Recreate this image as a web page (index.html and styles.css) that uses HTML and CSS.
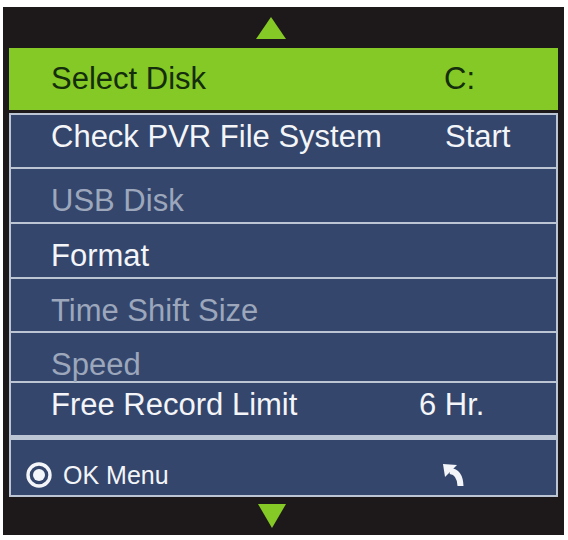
FILE: index.html
```html
<!DOCTYPE html>
<html lang="en">
<head>
<meta charset="utf-8">
<title>PVR File System</title>
<link rel="stylesheet" href="styles.css">
</head>
<body>
<div class="frame">
  <div class="arrow arrow--up">
    <svg width="30" height="22" viewBox="0 0 30 22"><polygon points="15,0 30,22 0,22" fill="#84c925"/></svg>
  </div>
  <div class="row row--selected">
    <span class="label">Select Disk</span><span class="value">C:</span>
  </div>
  <div class="list">
    <div class="row row--high"><span class="label">Check PVR File System</span><span class="value value--start">Start</span></div>
    <div class="row row--dim row--tall"><span class="label">USB Disk</span></div>
    <div class="row row--tall"><span class="label">Format</span></div>
    <div class="row row--dim"><span class="label">Time Shift Size</span></div>
    <div class="row row--dim row--short"><span class="label">Speed</span></div>
    <div class="row row--high"><span class="label">Free Record Limit</span><span class="value value--wide">6 Hr.</span></div>
    <div class="footer">
      <svg class="ok-icon" width="26" height="26" viewBox="0 0 26 26"><circle cx="13" cy="13" r="11" fill="none" stroke="#f3f5f8" stroke-width="3.4"/><circle cx="13" cy="13" r="6" fill="#f3f5f8"/></svg>
      <span class="footer-label">OK Menu</span>
      <svg class="back-icon" width="22" height="24" viewBox="0 0 22 24"><polygon points="0,1 14,2 2,14" fill="#f3f5f8"/><path d="M7 8 Q17 9 17.5 23" fill="none" stroke="#f3f5f8" stroke-width="6"/></svg>
    </div>
  </div>
  <div class="arrow arrow--down">
    <svg width="28" height="24" viewBox="0 0 28 24"><polygon points="0,0 28,0 14,24" fill="#84c925"/></svg>
  </div>
</div>
</body>
</html>
```
FILE: styles.css
```css
body {
  margin: 0;
  background: #ffffff;
  font-family: "Liberation Sans", Arial, sans-serif;
}

.frame {
  margin: 7px 0 0 3px;
  width: 561px;
  height: 528px;
  box-sizing: border-box;
  padding: 0 6px;
  background: #1d1819;
  display: flex;
  flex-direction: column;
}

.arrow {
  box-sizing: border-box;
}

.arrow svg {
  display: block;
}

.arrow--up {
  height: 41px;
  padding: 10px 0 0 247px;
}

.arrow--down {
  height: 38px;
  padding: 7px 0 0 249px;
}

.row {
  box-sizing: border-box;
  height: 52px;
  display: grid;
  grid-template-columns: 393px auto;
  align-content: start;
  padding: 16px 0 0 40px;
  font-size: 31px;
  line-height: 31px;
  background: #34466c;
  color: #f3f5f8;
  white-space: nowrap;
}

.row--selected {
  height: 62px;
  padding: 15px 0 0 42px;
  background: #84c925;
  color: #142d0c;
}

.row--high {
  padding-top: 6px;
}

.row--tall {
  height: 53px;
}

.row--short {
  height: 48px;
}

.row--dim {
  color: #9ca7bc;
}

.value--start {
  padding-left: 1px;
}

.value--wide {
  margin-left: -25px;
}

.list {
  margin-top: 3px;
  padding: 2px;
  background: #bcc5d4;
  display: flex;
  flex-direction: column;
  gap: 2px;
}

.footer {
  box-sizing: border-box;
  height: 55px;
  margin-top: 3px;
  padding: 23px 0 0 15px;
  background: #34466c;
  color: #f3f5f8;
  display: flex;
  align-items: flex-start;
  font-size: 25px;
  line-height: 25px;
}

.ok-icon {
  display: block;
  margin-top: -1px;
}

.footer-label {
  width: 380px;
  margin-left: 11px;
}

.back-icon {
  display: block;
}
```
